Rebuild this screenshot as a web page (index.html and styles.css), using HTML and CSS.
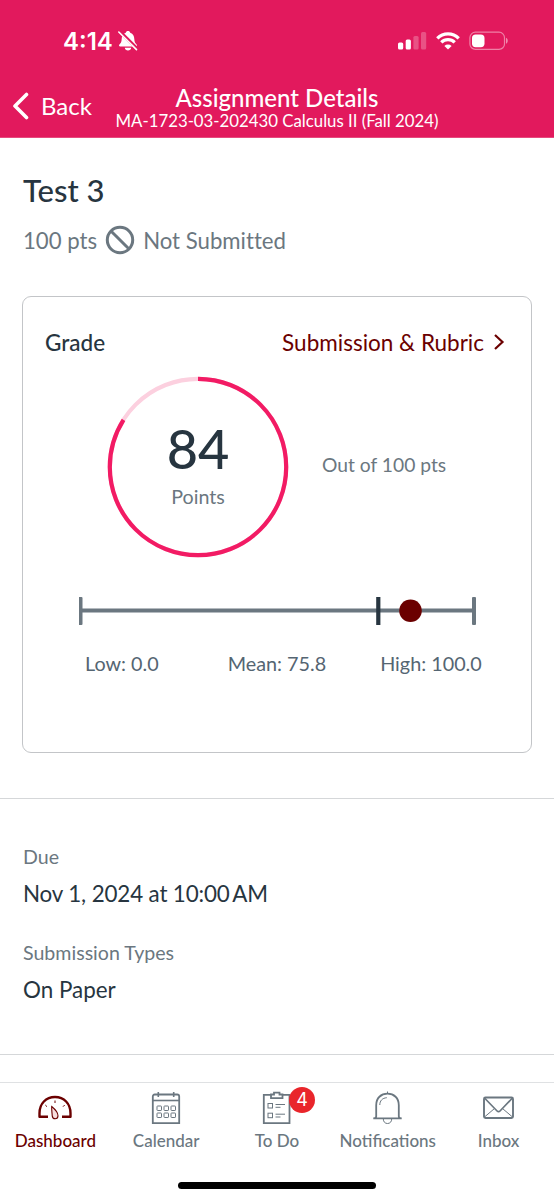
FILE: index.html
```html
<!DOCTYPE html>
<html lang="en">
<head>
  <meta charset="UTF-8" />
  <meta name="viewport" content="width=device-width, initial-scale=1.0"/>
  <title>Assignment Details</title>
  <link rel="stylesheet" href="styles.css">
</head>
<body>

<header>
  <div class="status-bar">
    <span class="time">4:14</span>
    <svg class="muted" width="22" height="22" viewBox="0 0 22 22">
      <path d="M11 1c-1.200 0-2 .7-2.200 1.700C5.800 3.700 4.800 6 4.700 9c-.1 3-1 4.200-2.300 5.600-.8.900-.4 1.900.8 1.900h15.600c1.200 0 1.600-1 .8-1.900C18.300 13.200 17.400 12 17.300 9c-.1-3-1.100-5.300-4.100-6.300C13 1.700 12.200 1 11 1zM7.800 17.800h6.400c-.2 1.700-1.500 2.700-3.200 2.700s-3-1-3.200-2.700z" fill="#fff"/>
      <path d="M3 1.700l18 18" stroke="#e2195d" stroke-width="3.400"/>
      <path d="M1.800 2l17.700 17.600" stroke="#fff" stroke-width="1.600" stroke-linecap="round"/>
    </svg>
    <div class="status-icons">
      <svg width="29" height="18" viewBox="0 0 29 18" fill="#fff">
        <rect x="0" y="10.500" width="5.200" height="7" rx="1.500"/>
        <rect x="7.700" y="7.500" width="5.200" height="10" rx="1.500"/>
        <rect x="15.400" y="4" width="5.200" height="13.500" rx="1.500" opacity=".25"/>
        <rect x="23" y="0" width="5.200" height="17.500" rx="1.500" opacity=".25"/>
      </svg>
      <svg width="24" height="18" viewBox="0 0 24 18" fill="none" stroke="#fff" stroke-width="3.300">
        <path d="M1.300 6.300a15.200 15.200 0 0 1 21.400 0"/>
        <path d="M5.300 10.400a9.500 9.500 0 0 1 13.400 0"/>
        <path d="M12 17.500l-3.600-3.600a5.100 5.100 0 0 1 7.200 0z" fill="#fff" stroke="none"/>
      </svg>
      <svg width="39" height="20" viewBox="0 0 39 20">
        <rect x=".9" y="1.200" width="34.600" height="17.200" rx="5.500" fill="none" stroke="#fff" stroke-width="1.200" opacity=".45"/>
        <path d="M37 6.800c2.300.8 2.300 5.200 0 6z" fill="#fff" opacity=".5"/>
        <rect x="3" y="3.400" width="12.500" height="12.800" rx="3.700" fill="#fff"/>
      </svg>
    </div>
  </div>

  <div class="nav-bar">
    <a class="back">
      <svg width="17" height="28" viewBox="0 0 17 28"><path d="M14.500 2.500L3 14l11.500 11.500" fill="none" stroke="#fff" stroke-width="3.600" stroke-linecap="round" stroke-linejoin="round"/></svg>
      <span>Back</span>
    </a>
    <div class="nav-title">
      <h1>Assignment Details</h1>
      <p>MA-1723-03-202430 Calculus II (Fall 2024)</p>
    </div>
  </div>
</header>

<main>
  <div class="summary">
    <h2>Test 3</h2>
    <div class="status">
      <span class="points">100 pts</span>
      <svg width="30" height="30" viewBox="0 0 30 30" fill="none" stroke="#6b7780" stroke-width="3"><circle cx="15" cy="15" r="12.700"/><path d="M6.200 6.200l17.600 17.600"/></svg>
      <span class="submitted">Not Submitted</span>
    </div>
  </div>

  <div class="grade-card">
    <div class="card-head">
      <h3>Grade</h3>
      <a class="rubric">
        <span>Submission &amp; Rubric</span>
        <svg width="12" height="18" viewBox="0 0 12 18"><path d="M2 2l7.500 7L2 16" fill="none" stroke="#6b0000" stroke-width="2.200"/></svg>
      </a>
    </div>

    <div class="score-row">
      <div class="ring">
        <svg width="182" height="182" viewBox="0 0 182 182" fill="none" stroke-width="4.200">
          <circle cx="91" cy="91" r="88.200" stroke="#fcd0df"/>
          <circle cx="91" cy="91" r="88.200" stroke="#f21b64" pathLength="100" stroke-dasharray="84 16" transform="rotate(-90 91 91)"/>
        </svg>
        <div class="ring-text">
          <span class="score">84</span>
          <span class="unit">Points</span>
        </div>
      </div>
      <span class="out-of">Out of 100 pts</span>
    </div>

    <svg class="stats" width="398" height="28" viewBox="0 0 398 28">
      <rect x="2" y="11.500" width="394" height="4" fill="#6b7780"/>
      <rect x="-.5" y="0" width="4" height="28" rx="1" fill="#6b7780"/>
      <rect x="393" y="0" width="4" height="28" rx="1" fill="#6b7780"/>
      <rect x="297.200" y="0" width="4.200" height="28" fill="#273540"/>
      <circle cx="331.500" cy="13.700" r="11.300" fill="#6b0000"/>
    </svg>
    <div class="stats-labels">
      <span class="low">Low: 0.0</span>
      <span class="mean">Mean: 75.8</span>
      <span class="high">High: 100.0</span>
    </div>
  </div>

  <div class="details">
    <h4>Due</h4>
    <p><span class="date">Nov 1, 2024 at 10:00 <span class="meridiem">AM</span></span></p>
    <h4>Submission Types</h4>
    <p><span class="type">On Paper</span></p>
  </div>
</main>

<nav class="tab-bar">
  <a class="tab active">
    <svg width="36" height="36" viewBox="0 0 36 36" fill="none" stroke="#6b0000">
      <path d="M11 26.800H2.500v-3.500C2.500 13.500 9 7 18 7s15.500 6.500 15.500 16.300v3.500H25" stroke-width="2.400" stroke-linejoin="round"/>
      <path d="M14.700 16.500c4 3.300 6.300 6 6.300 9.200 0 1.800-1.200 3-2.800 3s-2.900-1.300-3-3.100c-.1-2.700-.7-5.600-.5-9.100z" fill="#f7dede" stroke-width="1.100"/>
      <path d="M18 10.500v2.500M8.300 15l1.700 1.700M27.700 15L26 16.700" stroke-width="1"/>
    </svg>
    <span>Dashboard</span>
  </a>
  <a class="tab">
    <svg width="36" height="36" viewBox="0 0 36 36" fill="none" stroke="#6b7780">
      <path d="M4.800 33.200V6.500c0-1.300.7-2 2-2h22.400c1.300 0 2 .7 2 2v26.700z" stroke-width="1.800"/>
      <path d="M4.800 10.500h26.400" stroke-width="1.600"/>
      <path d="M10.300 2v5M25.700 2v5" stroke-width="1.600"/>
      <g stroke-width="1">
        <rect x="9" y="16" width="4.500" height="4.500" rx=".6"/><rect x="16" y="16" width="4.500" height="4.500" rx=".6"/><rect x="23" y="16" width="4.500" height="4.500" rx=".6"/>
        <rect x="9" y="23" width="4.500" height="4.500" rx=".6"/><rect x="16" y="23" width="4.500" height="4.500" rx=".6"/><rect x="23" y="23" width="4.500" height="4.500" rx=".6"/>
      </g>
    </svg>
    <span>Calendar</span>
  </a>
  <a class="tab">
    <svg width="36" height="36" viewBox="0 0 36 36" fill="none" stroke="#6b7780">
      <path d="M12 4.800H4.800v28.400h25.700V4.800H23.500" stroke-width="1.800"/>
      <path d="M12 8.200V4.500h3V2.700h5.500v1.800h3v3.700z" stroke-width="1.800"/>
      <g stroke-width="1">
        <rect x="9" y="13.500" width="4.500" height="4.500"/><rect x="9" y="23.200" width="4.500" height="4.500"/>
        <path d="M16.500 14.500h9.500M16.500 17.300h5M16.500 24.200h9.500M16.500 27h5"/>
      </g>
    </svg>
    <b class="badge">4</b>
    <span>To Do</span>
  </a>
  <a class="tab">
    <svg width="36" height="36" viewBox="0 0 36 36" fill="none" stroke="#6b7780">
      <path d="M6.200 26.500V15.200C6.200 8 11 3.700 17.500 3.700S28.800 8 28.800 15.200v11.300c0 1.200.7 1.700 2.900 1.800H3.300c2.200-.1 2.900-.6 2.900-1.800z" stroke-width="1.800"/>
      <path d="M17.500 1.500v2M9.800 15c0-4.300 2.600-7 7-7.300M13.300 28.800c0 3 1.700 4.700 4.200 4.700s4.200-1.700 4.200-4.700" stroke-width="1"/>
    </svg>
    <span>Notifications</span>
  </a>
  <a class="tab">
    <svg width="36" height="36" viewBox="0 0 36 36" fill="none" stroke="#6b7780">
      <path d="M3.500 27l9.800-8.300M31.500 27l-9.800-8.300" stroke-width="1"/>
      <rect x="3" y="7.500" width="29" height="20.500" rx="1.500" stroke-width="1.900"/>
      <path d="M3.500 8l12.600 13c.9.900 2 .9 2.900 0L31.500 8" stroke-width="1.700"/>
    </svg>
    <span>Inbox</span>
  </a>
</nav>
<div class="home-bar"></div>

</body>
</html>
```
FILE: styles.css
```css
* {
  box-sizing: border-box;
}
body {
  font-family: Lato, sans-serif;
  background: #fff;
  color: #273540;
  margin: 0;
  height: 1200px;
  display: flex;
  flex-direction: column;
  overflow: hidden;
}
h1, h2, h3, h4, p {
  margin: 0;
  font-weight: 500;
}
span {
  white-space: nowrap;
}
svg {
  display: block;
  flex: none;
}
header {
  background: #e2195d;
  color: #fff;
  height: 138px;
  border-bottom: 1px solid #e64a7e;
}
.status-bar {
  height: 82px;
  padding: 0 46px 0 63px;
  display: flex;
  align-items: center;
}
.time {
  font: 600 24px Inter, sans-serif;
  width: 54px;
}
.status-icons {
  margin-left: auto;
  display: flex;
  align-items: center;
  gap: 9px;
}
.nav-bar {
  display: grid;
  grid-template-columns: 1fr auto 1fr;
  height: 48px;
}
.back {
  display: flex;
  align-items: center;
  gap: 12px;
  padding-left: 12px;
  font-size: 24px;
}
.back span {
  padding-bottom: 2px;
}
.nav-title {
  text-align: center;
  padding-top: 1px;
}
.nav-title h1 {
  font-size: 24px;
  line-height: 30px;
}
.nav-title p {
  font-size: 16.800px;
  font-weight: 400;
  line-height: 16px;
}
main {
  height: 945px;
  border-bottom: 1px solid #dfe1e3;
}
.summary {
  height: 158px;
  padding: 33px 23px 0;
}
.summary h2 {
  font-size: 31px;
  line-height: 38px;
}
.status {
  display: flex;
  align-items: center;
  gap: 8px;
  margin-top: 16px;
  color: #6b7780;
  font-size: 22.200px;
}
.submitted {
  font-variant-ligatures: none;
}
.grade-card {
  margin: 0 22px;
  height: 457px;
  border: 1px solid #c3c5c8;
  border-radius: 9px;
}
.card-head {
  display: flex;
  justify-content: space-between;
  align-items: center;
  height: 28px;
  margin: 31px 26px 0 22px;
}
.card-head h3 {
  font-size: 22.500px;
}
.rubric {
  display: flex;
  align-items: center;
  gap: 9px;
  color: #6b0000;
  font-size: 22.500px;
}
.score-row {
  display: flex;
  align-items: center;
  gap: 33px;
  margin: 20px 0 0 84px;
}
.ring {
  display: grid;
}
.ring > * {
  grid-area: 1 / 1;
}
.ring-text {
  display: flex;
  flex-direction: column;
  align-items: center;
  padding-top: 40px;
}
.score {
  font-size: 54px;
  line-height: 66px;
  font-weight: 500;
}
.unit {
  font-size: 19.700px;
  line-height: 30px;
  color: #6b7780;
}
.out-of {
  padding-bottom: 5px;
  font-size: 19.250px;
  color: #6b7780;
}
.stats {
  margin: 39px 0 0 56px;
}
.stats-labels {
  display: flex;
  gap: 69px;
  margin: 26px 0 0 62px;
  font-size: 19.800px;
  line-height: 24px;
  color: #556572;
}
.high {
  margin-left: -15px;
}
.details {
  margin-top: 45px;
  height: 257px;
  padding: 46px 23px 0;
  border-top: 1px solid #d5d7d9;
  border-bottom: 1px solid #d5d7d9;
}
.details h4 {
  font-size: 19.600px;
  font-weight: 400;
  line-height: 24px;
  color: #6b7780;
}
.details p {
  font-size: 22.400px;
  font-weight: 400;
  line-height: 28px;
  margin: 11px 0 33px;
}
.date {
  letter-spacing: -.15px;
}
.meridiem {
  margin-left: -3px;
}
.tab-bar {
  display: grid;
  grid-template-columns: repeat(5, 1fr);
  height: 80px;
}
.tab {
  position: relative;
  display: flex;
  flex-direction: column;
  align-items: center;
  padding-top: 7px;
  color: #6b7780;
  font-size: 17px;
  font-weight: 500;
  line-height: 29px;
}
.active {
  color: #6b0000;
}
.badge {
  position: absolute;
  left: 67.500px;
  top: 4px;
  width: 26px;
  height: 26px;
  border-radius: 50%;
  background: #e9252b;
  color: #fff;
  font: 18px/26px Inter, sans-serif;
  text-align: center;
}
.home-bar {
  width: 198px;
  height: 7px;
  margin: 19px auto 0;
  border-radius: 4px;
  background: #000;
}
```
